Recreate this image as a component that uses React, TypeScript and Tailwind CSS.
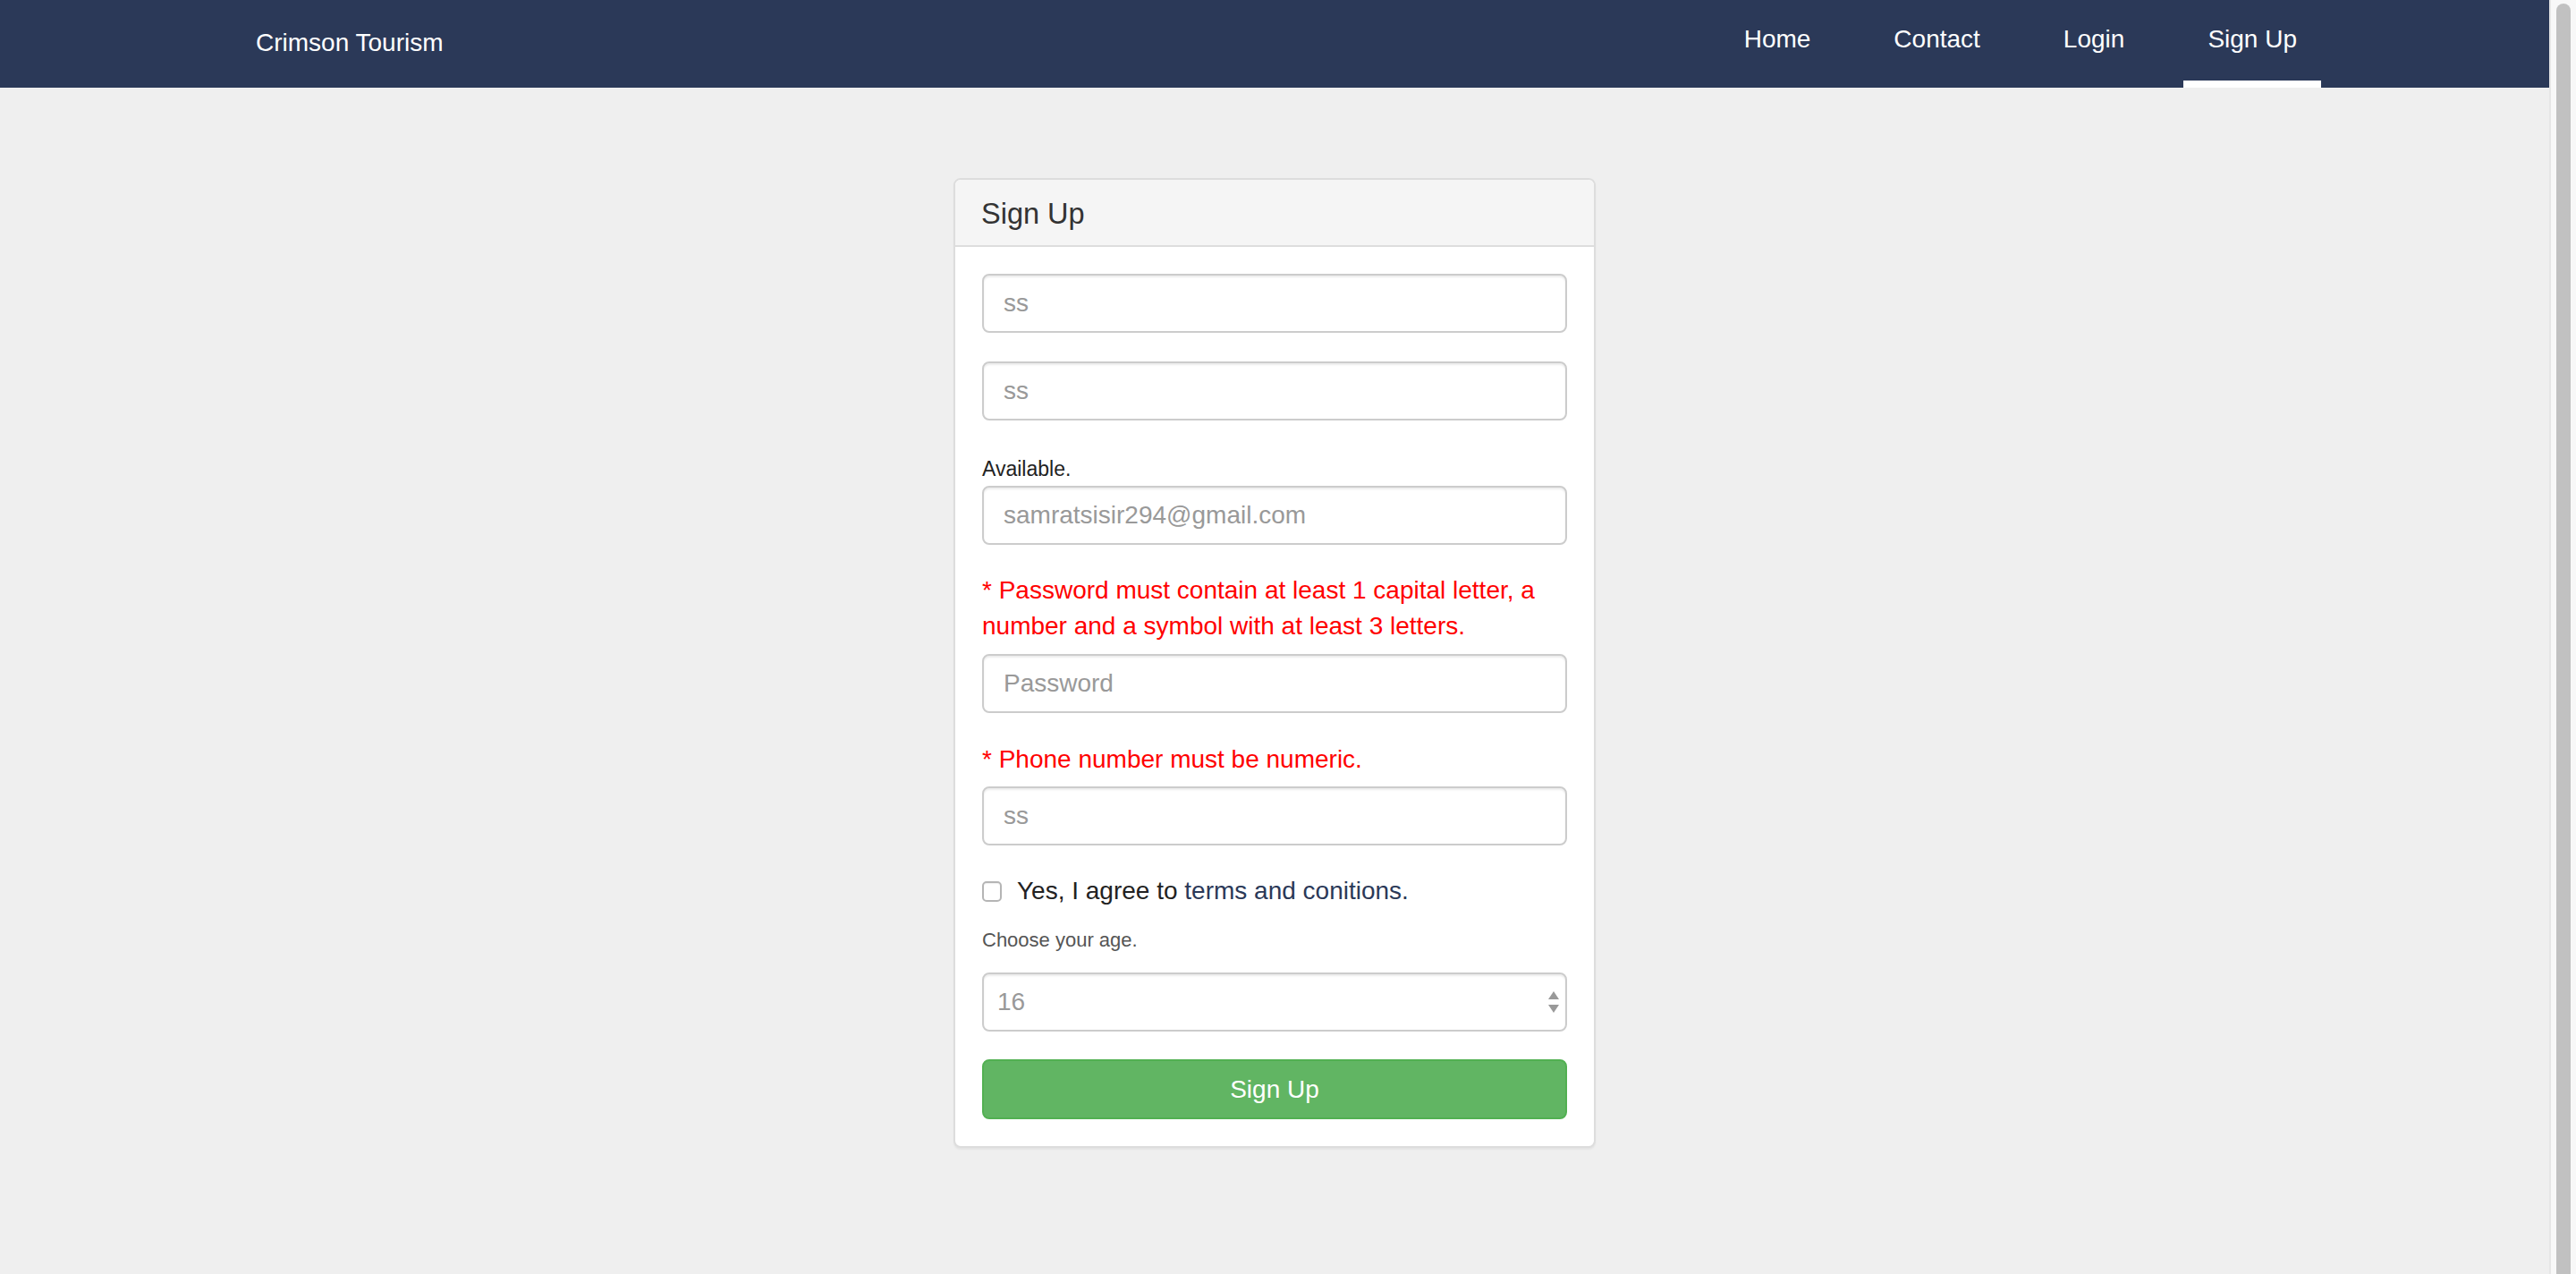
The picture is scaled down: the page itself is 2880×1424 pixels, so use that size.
import React from 'react';

const navLinks = [
  { label: 'Home', active: false },
  { label: 'Contact', active: false },
  { label: 'Login', active: false },
  { label: 'Sign Up', active: true },
];

function TextInput({ placeholder, className = '' }: { placeholder: string; className?: string }) {
  return (
    <input
      type="text"
      placeholder={placeholder}
      readOnly
      className={`block w-full h-[66px] px-[22px] bg-white border-2 border-[#cccccc] rounded-[8px] text-[28px] text-[#555] placeholder:text-[#999] shadow-[inset_0_2px_2px_rgba(0,0,0,0.075)] outline-none font-['Liberation_Sans',Arial,sans-serif] ${className}`}
    />
  );
}

function Navbar() {
  return (
    <div className="h-[98px] bg-[#2b3958] text-white">
      <div className="mx-auto w-[2340px] h-full flex justify-between">
        <div className="pl-[31px] pt-[28px] text-[28px] leading-[40px]">Crimson Tourism</div>
        <ul className="flex gap-[39px] h-full">
          {navLinks.map((l) => (
            <li key={l.label} className="flex flex-col justify-between h-full">
              <a className="px-[27px] pt-[24px] text-[28px] leading-[40px] text-white">{l.label}</a>
              <span className={`h-[8px] ${l.active ? 'bg-white' : 'bg-transparent'}`} />
            </li>
          ))}
        </ul>
      </div>
    </div>
  );
}

function SignUpCard() {
  return (
    <div className="mx-auto mt-[101px] w-[718px] bg-white border-2 border-[#dddddd] rounded-[8px] shadow-[0_2px_2px_rgba(0,0,0,0.05)]">
      <div className="bg-[#f5f5f5] border-b-2 border-[#dddddd] rounded-t-[6px] px-[29px] pt-[20px] pb-[17px]">
        <h3 className="text-[32.5px] leading-[36px] text-[#333]">Sign Up</h3>
      </div>
      <div className="flex flex-col p-[30px]">
        <TextInput placeholder="ss" />
        <TextInput placeholder="ss" className="mt-[32px]" />

        <label className="mt-[40px] mb-[5px] text-[23px] leading-[28px] text-[#222]">Available.</label>
        <TextInput placeholder="samratsisir294@gmail.com" />

        <p className="mt-[31px] mb-[11px] text-[28px] leading-[40px] text-[#ff0000]">
          * Password must contain at least 1 capital letter, a number and a symbol with at least 3 letters.
        </p>
        <TextInput placeholder="Password" />

        <p className="mt-[32px] mb-[10px] text-[28px] leading-[40px] text-[#ff0000]">* Phone number must be numeric.</p>
        <TextInput placeholder="ss" />

        <div className="mt-[31px] flex items-center gap-[17px] h-[40px]">
          <span className="w-[22px] h-[23px] rounded-[5px] border-2 border-[#b5b5b5] bg-white shadow-[inset_0_1px_1px_rgba(0,0,0,0.06)]" />
          <span className="text-[28px] leading-[40px] text-[#222]">
            Yes, I agree to <a className="text-[#2b3958]">terms and conitions.</a>
          </span>
        </div>

        <p className="mt-[20px] text-[22px] leading-[30px] text-[#555]">Choose your age.</p>

        <div className="mt-[21px] h-[66px] flex items-center justify-between pl-[15px] pr-[7px] bg-white border-2 border-[#cccccc] rounded-[8px] shadow-[inset_0_2px_2px_rgba(0,0,0,0.075)]">
          <span className="text-[28px] text-[#999]">16</span>
          <svg width="12" height="24" viewBox="0 0 12 24">
            <polygon points="6,0 12,9 0,9" fill="#999" />
            <polygon points="0,15 12,15 6,24" fill="#999" />
          </svg>
        </div>

        <button className="mt-[31px] h-[67px] w-full rounded-[8px] bg-[#61b563] border-2 border-[#52b052] text-white text-[28px]">
          Sign Up
        </button>
      </div>
    </div>
  );
}

export default function App() {
  return (
    <div className="flex h-[1424px] w-[2880px] overflow-hidden bg-[#efefef] font-['Liberation_Sans',Arial,sans-serif]">
      <div className="flex-1">
        <Navbar />
        <SignUpCard />
      </div>
      <div className="w-[30px] flex border-l-2 border-[#e6e6e6] bg-[#f8f8f8]">
        <div className="ml-[6px] mt-[4px] w-[16px] rounded-t-full bg-[#c1c1c1]" />
      </div>
    </div>
  );
}
